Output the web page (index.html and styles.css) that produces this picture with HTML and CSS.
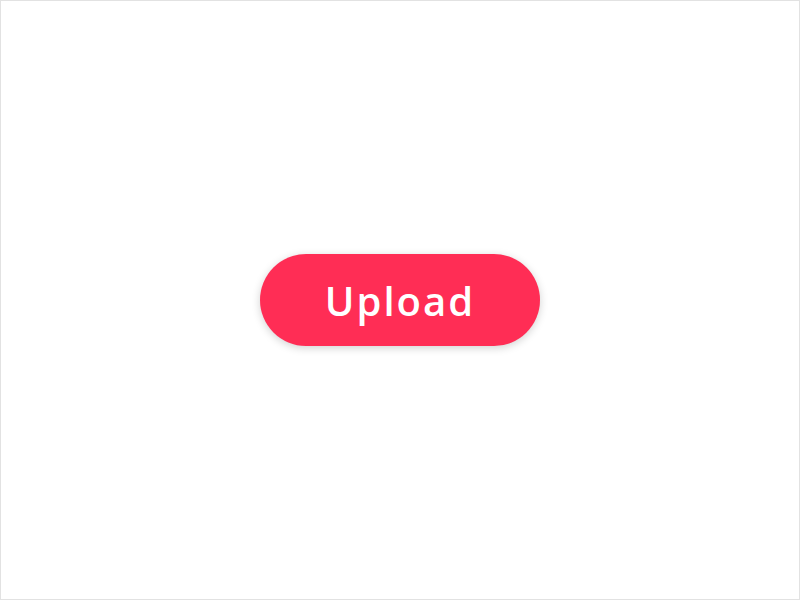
FILE: index.html
```html
<!DOCTYPE html>
<html>
<head>
<meta charset="utf-8">
<link rel="stylesheet" href="styles.css">
</head>
<body>
<div class="stage">
  <button class="upload">Upload</button>
</div>
</body>
</html>
```
FILE: styles.css
```css
html, body {
  margin: 0;
  padding: 0;
  background: #ffffff;
}
.stage {
  box-sizing: border-box;
  width: 800px;
  height: 600px;
  border: 1px solid #e2e2e2;
  display: flex;
  align-items: center;
  justify-content: center;
}
.upload {
  width: 280px;
  height: 92px;
  border: none;
  border-radius: 46px;
  background: #ff2d55;
  color: #ffffff;
  font-family: "Open Sans", sans-serif;
  font-weight: 600;
  font-size: 40px;
  letter-spacing: 2px;
  padding: 0;
  box-shadow: 0 2px 8px rgba(0, 0, 0, 0.18);
}
```
